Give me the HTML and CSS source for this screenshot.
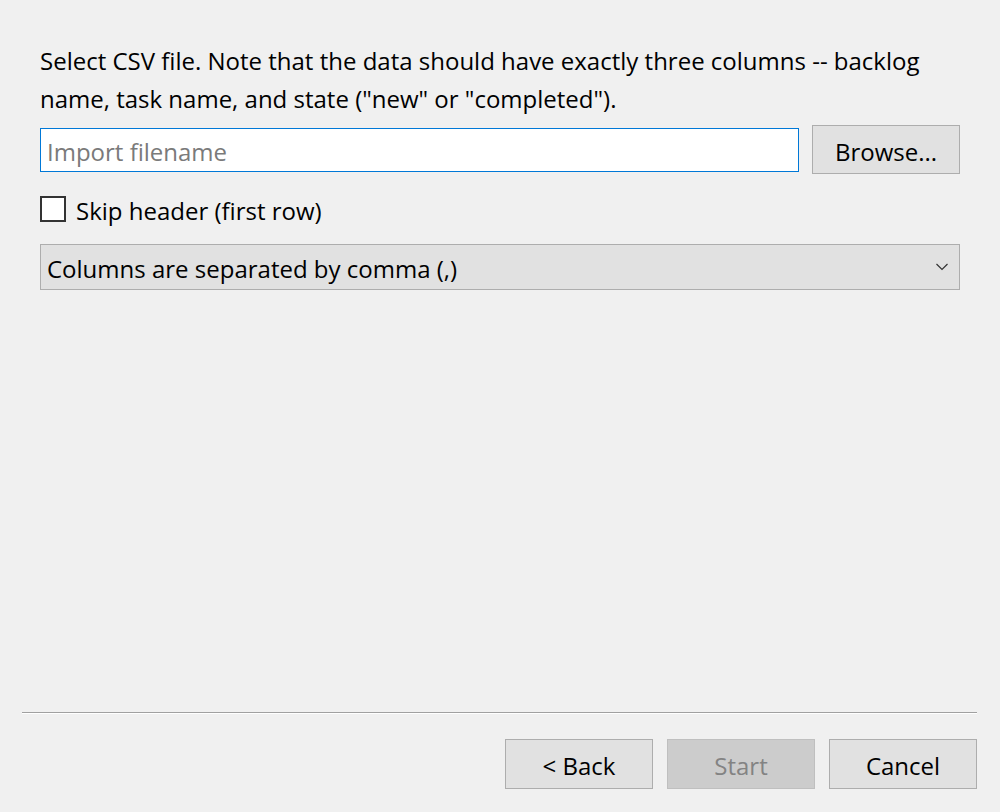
FILE: index.html
```html
<!DOCTYPE html>
<html>
<head>
<meta charset="utf-8">
<link rel="stylesheet" href="styles.css">
</head>
<body>
<div class="page">
  <div class="content">
    <p class="intro">Select CSV file. Note that the data should have exactly three columns -- backlog name, task name, and state ("new" or "completed").</p>
    <div class="file-row">
      <div class="input"><span class="placeholder">Import filename</span></div>
      <div class="btn browse">Browse...</div>
    </div>
    <div class="check-row">
      <span class="checkbox"></span>
      <span class="check-label">Skip header (first row)</span>
    </div>
    <div class="select">
      <span>Columns are separated by comma (,)</span>
      <svg class="chev" width="12" height="8" viewBox="0 0 12 8"><path d="M0.5 1 L6 6.5 L11.5 1" fill="none" stroke="#333" stroke-width="1.2"/></svg>
    </div>
  </div>
  <div class="footer">
    <div class="sep"></div>
    <div class="buttons">
      <div class="btn fbtn">&lt; Back</div>
      <div class="btn fbtn disabled">Start</div>
      <div class="btn fbtn">Cancel</div>
    </div>
  </div>
</div>
</body>
</html>
```
FILE: styles.css
```css
html, body {
  margin: 0;
  padding: 0;
  background: #f0f0f0;
}
* {
  box-sizing: border-box;
}
body {
  font-family: "Open Sans", "Noto Sans", sans-serif;
  font-size: 24px;
  line-height: 32px;
  color: #000;
}
.page {
  width: 1000px;
  height: 812px;
  display: flex;
  flex-direction: column;
  justify-content: space-between;
}
.content {
  padding: 42px 40px 0 40px;
  display: flex;
  flex-direction: column;
}
.intro {
  margin: 0;
  line-height: 38px;
  width: 920px;
}
.file-row {
  display: flex;
  align-items: center;
  gap: 13px;
  margin-top: 7px;
}
.input {
  flex: 1;
  height: 44px;
  border: 1px solid #0078d7;
  background: #fff;
  display: flex;
  align-items: center;
  padding: 4px 0 0 6px;
}
.placeholder {
  color: #7a7a7a;
}
.btn {
  width: 148px;
  height: 49px;
  border: 1px solid #adadad;
  background: #e1e1e1;
  display: flex;
  align-items: center;
  justify-content: center;
  padding-top: 4px;
}
.fbtn {
  height: 50px;
}
.check-row {
  display: flex;
  align-items: center;
  gap: 10px;
  height: 26px;
  margin-top: 22px;
}
.checkbox {
  width: 26px;
  height: 26px;
  border: 2px solid #333;
  background: #fff;
  display: block;
}
.check-label {
  line-height: 26px;
  padding-top: 4px;
}
.select {
  margin-top: 22px;
  height: 46px;
  border: 1px solid #adadad;
  background: #e1e1e1;
  display: flex;
  align-items: center;
  justify-content: space-between;
  padding: 4px 11px 0 6px;
}
.chev {
  margin-top: -4px;
}
.footer {
  padding: 0 23px 23px 22px;
}
.sep {
  height: 2px;
  background: #a0a0a0;
  border-bottom: 1px solid #fff;
}
.buttons {
  display: flex;
  justify-content: flex-end;
  gap: 14px;
  margin-top: 25px;
}
.disabled {
  background: #cccccc;
  border-color: #bfbfbf;
  color: #838383;
}
```
